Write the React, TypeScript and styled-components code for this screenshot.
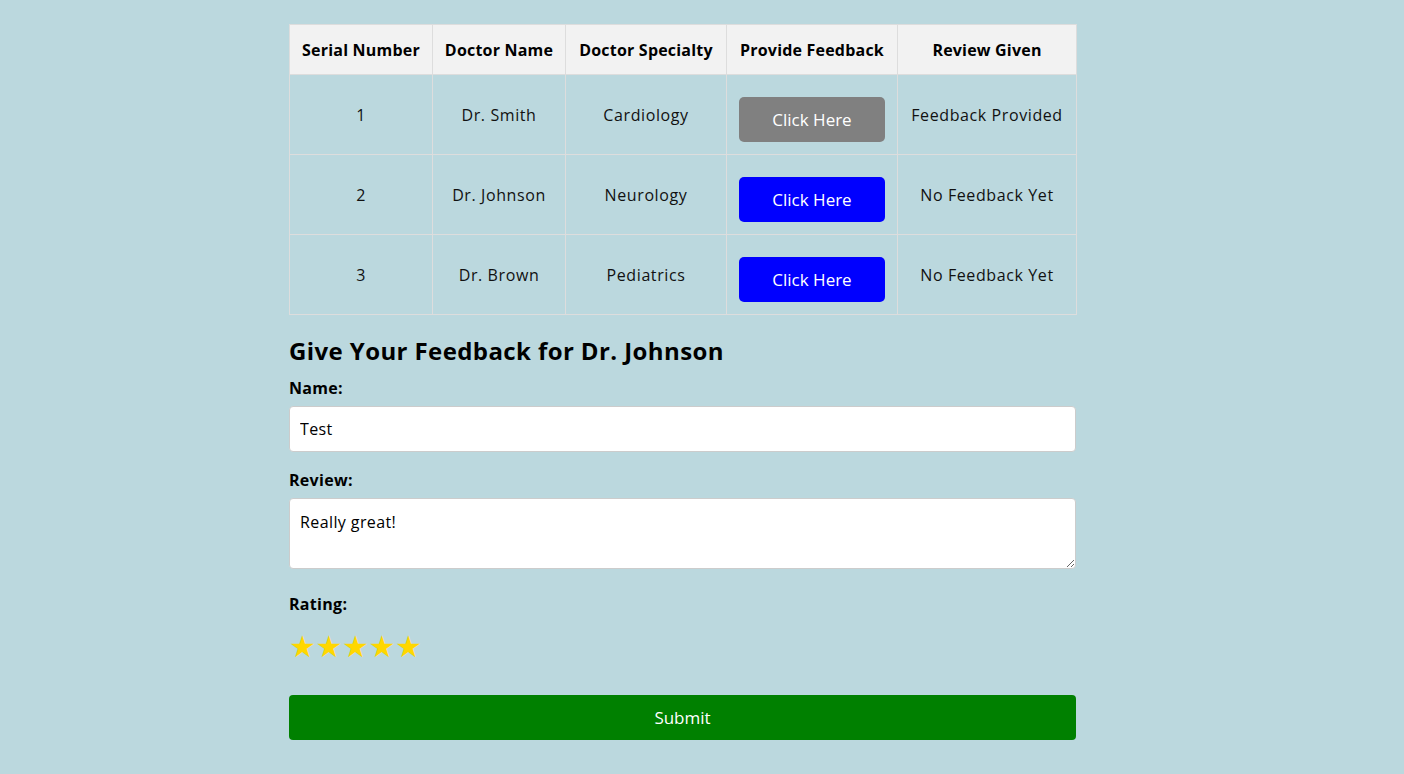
import React from "react";
import styled, { createGlobalStyle } from "styled-components";

const Global = createGlobalStyle`
  html, body { margin: 0; padding: 0; }
  body {
    background: #bbd8de;
    font-family: "Open Sans", "Noto Sans", sans-serif;
    color: #000;
  }
`;

const Page = styled.div`
  padding: 24px 0 34px 289px;
`;

const Container = styled.div`
  width: 787px;
  display: flex;
  flex-direction: column;
`;

const Table = styled.table`
  width: 787px;
  border-collapse: collapse;
  table-layout: fixed;
`;

const Th = styled.th`
  background: #f2f2f2;
  border: 1px solid #dddddd;
  height: 49px;
  padding: 0 4px;
  font-size: 16px;
  font-weight: 700;
  letter-spacing: 0.2px;
  text-align: center;
  white-space: nowrap;
  line-height: 20px;
`;

const Td = styled.td`
  border: 1px solid #dddddd;
  height: 79px;
  padding: 0 4px;
  font-size: 16px;
  letter-spacing: 0.6px;
  text-align: center;
  color: #111;
  white-space: nowrap;
`;

const RowButton = styled.button<{ $done: boolean }>`
  width: 146px;
  height: 45px;
  border: none;
  border-radius: 5px;
  background: ${(p) => (p.$done ? "#808080" : "#0000ff")};
  color: #fff;
  font-family: "Open Sans", sans-serif;
  font-size: 17px;
  margin-top: 10px;
  cursor: pointer;
`;

const Heading = styled.h2`
  margin: 22px 0 0;
  font-size: 24px;
  font-weight: 700;
  letter-spacing: 0.4px;
  line-height: 28px;
`;

const Label = styled.label<{ $gap?: number }>`
  display: block;
  font-size: 16px;
  font-weight: 700;
  letter-spacing: 0.3px;
  line-height: 20px;
  margin-top: ${(p) => p.$gap ?? 13}px;
`;

const TextInput = styled.input`
  box-sizing: border-box;
  width: 100%;
  height: 46px;
  margin-top: 8px;
  padding: 0 10px;
  border: 1px solid #cccccc;
  border-radius: 4px;
  background: #fff;
  font-family: "Open Sans", sans-serif;
  font-size: 16px;
  letter-spacing: 0.4px;
  color: #000;
`;

const TextArea = styled.textarea`
  box-sizing: border-box;
  width: 100%;
  height: 71px;
  margin-top: 8px;
  padding: 12px 10px;
  border: 1px solid #cccccc;
  border-radius: 4px;
  background: #fff;
  font-family: "Open Sans", sans-serif;
  font-size: 16px;
  letter-spacing: 0.4px;
  color: #000;
  resize: vertical;
`;

const Stars = styled.div`
  display: flex;
  margin-top: 18px;
`;

const Star = styled.span`
  color: #ffd700;
  font-size: 30px;
  line-height: 30px;
  width: 26.5px;
  font-family: "DejaVu Sans", sans-serif;
`;

const Submit = styled.button`
  margin-top: 33px;
  width: 100%;
  height: 45px;
  border: none;
  border-radius: 4px;
  background: #008000;
  color: #fff;
  font-family: "Open Sans", sans-serif;
  font-size: 17px;
  cursor: pointer;
`;

const doctors = [
  { id: 1, name: "Dr. Smith", spec: "Cardiology", done: true },
  { id: 2, name: "Dr. Johnson", spec: "Neurology", done: false },
  { id: 3, name: "Dr. Brown", spec: "Pediatrics", done: false },
];

export default function App() {
  return (
    <Page>
      <Global />
      <Container>
        <Table>
          <colgroup>
            <col style={{ width: 143 }} />
            <col style={{ width: 133 }} />
            <col style={{ width: 161 }} />
            <col style={{ width: 171 }} />
            <col style={{ width: 179 }} />
          </colgroup>
          <thead>
            <tr>
              <Th>Serial Number</Th>
              <Th>Doctor Name</Th>
              <Th>Doctor Specialty</Th>
              <Th>Provide Feedback</Th>
              <Th>Review Given</Th>
            </tr>
          </thead>
          <tbody>
            {doctors.map((d) => (
              <tr key={d.id}>
                <Td>{d.id}</Td>
                <Td>{d.name}</Td>
                <Td>{d.spec}</Td>
                <Td>
                  <RowButton $done={d.done}>Click Here</RowButton>
                </Td>
                <Td>{d.done ? "Feedback Provided" : "No Feedback Yet"}</Td>
              </tr>
            ))}
          </tbody>
        </Table>
        <Heading>Give Your Feedback for Dr. Johnson</Heading>
        <Label>Name:</Label>
        <TextInput defaultValue="Test" />
        <Label $gap={18}>Review:</Label>
        <TextArea defaultValue="Really great!" />
        <Label $gap={25}>Rating:</Label>
        <Stars>
          {[0, 1, 2, 3, 4].map((i) => (
            <Star key={i}>★</Star>
          ))}
        </Stars>
        <Submit>Submit</Submit>
      </Container>
    </Page>
  );
}
